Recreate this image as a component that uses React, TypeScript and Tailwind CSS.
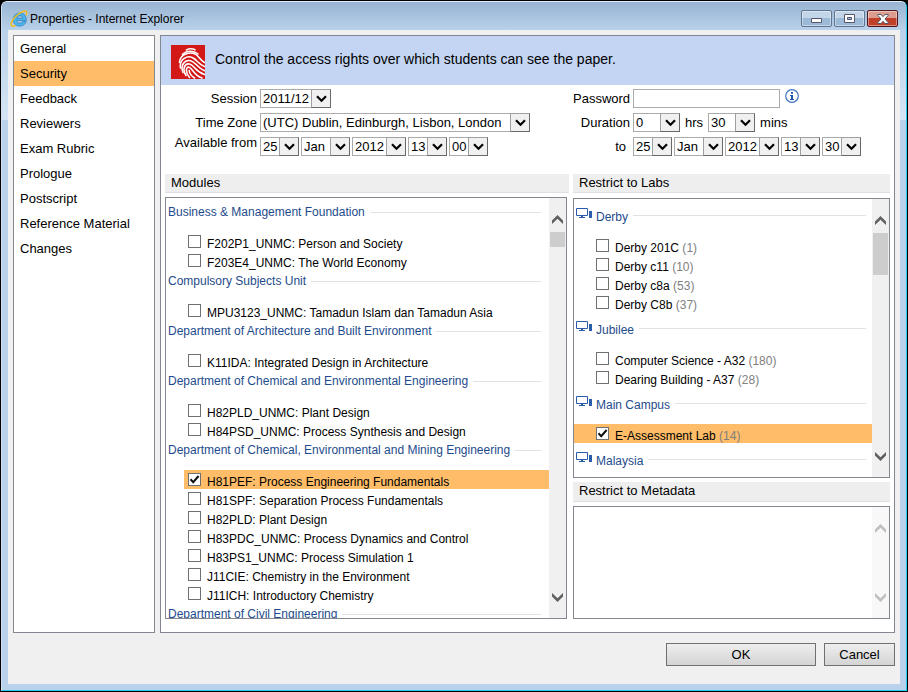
import React from "react";

type Item = { name: string; count?: number; checked?: boolean };
type Group = { title: string; items: Item[] };

const sections = [
  "General",
  "Security",
  "Feedback",
  "Reviewers",
  "Exam Rubric",
  "Prologue",
  "Postscript",
  "Reference Material",
  "Changes",
];

const modules: Group[] = [
  {
    title: "Business & Management Foundation",
    items: [{ name: "F202P1_UNMC: Person and Society" }, { name: "F203E4_UNMC: The World Economy" }],
  },
  { title: "Compulsory Subjects Unit", items: [{ name: "MPU3123_UNMC: Tamadun Islam dan Tamadun Asia" }] },
  {
    title: "Department of Architecture and Built Environment",
    items: [{ name: "K11IDA: Integrated Design in Architecture" }],
  },
  {
    title: "Department of Chemical and Environmental Engineering",
    items: [{ name: "H82PLD_UNMC: Plant Design" }, { name: "H84PSD_UNMC: Process Synthesis and Design" }],
  },
  {
    title: "Department of Chemical, Environmental and Mining Engineering",
    items: [
      { name: "H81PEF: Process Engineering Fundamentals", checked: true },
      { name: "H81SPF: Separation Process Fundamentals" },
      { name: "H82PLD: Plant Design" },
      { name: "H83PDC_UNMC: Process Dynamics and Control" },
      { name: "H83PS1_UNMC: Process Simulation 1" },
      { name: "J11CIE: Chemistry in the Environment" },
      { name: "J11ICH: Introductory Chemistry" },
    ],
  },
  { title: "Department of Civil Engineering", items: [] },
];

const labs: Group[] = [
  {
    title: "Derby",
    items: [
      { name: "Derby 201C", count: 1 },
      { name: "Derby c11", count: 10 },
      { name: "Derby c8a", count: 53 },
      { name: "Derby C8b", count: 37 },
    ],
  },
  {
    title: "Jubilee",
    items: [
      { name: "Computer Science - A32", count: 180 },
      { name: "Dearing Building - A37", count: 28 },
    ],
  },
  { title: "Main Campus", items: [{ name: "E-Assessment Lab", count: 14, checked: true }] },
  { title: "Malaysia", items: [] },
];

function Chevron({ up = false }: { up?: boolean }) {
  return (
    <svg width="11" height="9" viewBox="0 0 11 9" aria-hidden="true">
      <path
        d={up ? "M0 5.5 5.5 0 11 5.5V9L5.5 3.8 0 9Z" : "M0 0 5.5 5.2 11 0V3.5L5.5 9 0 3.5Z"}
        fill="currentColor"
      />
    </svg>
  );
}

function ScrollBar({ thumb, disabled = false }: { thumb?: string; disabled?: boolean }) {
  const tone = disabled ? "text-[#bfbfbf]" : "text-[#606060]";
  return (
    <div className={`flex w-[17px] shrink-0 flex-col ${disabled ? "bg-[#f8f8f8]" : "bg-[#f0f0f0]"}`}>
      <button type="button" aria-label="Scroll up" disabled={disabled} className={`flex h-[34px] items-center justify-center pt-2 ${tone}`}>
        <Chevron up />
      </button>
      <div className="flex-1 px-px">{thumb && <div className={`bg-[#cdcdcd] ${thumb}`} />}</div>
      <button type="button" aria-label="Scroll down" disabled={disabled} className={`flex h-[34px] items-center justify-center pb-2 ${tone}`}>
        <Chevron />
      </button>
    </div>
  );
}

function Select({ label, id, value, width }: { label: string; id?: string; value: string; width: string }) {
  return (
    <div className={`relative h-[19px] ${width}`}>
      <select
        id={id}
        aria-label={label}
        defaultValue={value}
        className="block h-full w-full appearance-none rounded-none border border-[#ababab] bg-white pl-[2px] text-[13px] leading-[17px] text-black outline-none"
      >
        <option>{value}</option>
      </select>
      <span className="pointer-events-none absolute inset-y-0 right-0 flex w-[20px] items-center justify-center border border-t-[#a0a0a0] border-r-[#696969] border-b-[#696969] border-l-[#a0a0a0] bg-[#f0f0f0]">
        <svg width="11" height="8" viewBox="0 0 11 8" aria-hidden="true">
          <path d="M1 1.3 5.5 5.8 10 1.3" fill="none" stroke="#000" strokeWidth="2.2" />
        </svg>
      </span>
    </div>
  );
}

function DateRow({ prefix, minute }: { prefix: string; minute: string }) {
  return (
    <div className="flex gap-[2px]">
      <Select label={`${prefix} day`} id={`${prefix}-day`} value="25" width="w-[39px]" />
      <Select label={`${prefix} month`} value="Jan" width="w-[49px]" />
      <Select label={`${prefix} year`} value="2012" width="w-[54px]" />
      <Select label={`${prefix} hour`} value="13" width="w-[39px]" />
      <Select label={`${prefix} minute`} value={minute} width="w-[39px]" />
    </div>
  );
}

function LabIcon() {
  return (
    <svg width="16" height="11" viewBox="0 0 16 11" className="mr-[4px] mb-1 shrink-0" aria-hidden="true">
      <path d="M.5.5h11v7H.5z" fill="#fff" stroke="#2a5caa" />
      <path d="M5 8h2v1h2v1H3V9h2z" fill="#2a5caa" />
      <path d="M13 3h3v7h-3z" fill="#2a5caa" />
    </svg>
  );
}

function CheckRow({ item, indent }: { item: Item; indent: string }) {
  return (
    <label className={`flex h-[19px] items-center whitespace-nowrap ${indent} ${item.checked ? "bg-[#ffbd69]" : ""}`}>
      <span className="relative h-[13px] w-[13px] shrink-0">
        <input
          type="checkbox"
          defaultChecked={item.checked}
          className="peer block h-[13px] w-[13px] appearance-none border border-[#707070] bg-white"
        />
        <svg
          width="13"
          height="13"
          viewBox="0 0 13 13"
          className="pointer-events-none absolute inset-0 hidden peer-checked:block"
          aria-hidden="true"
        >
          <path d="M2.5 6.3 5.2 9.2 10.6 3" fill="none" stroke="#111" strokeWidth="2" />
        </svg>
      </span>
      <span className="pt-[4px] pl-[6px] leading-4">
        {item.name}
        {item.count !== undefined && <span className="text-[#808080]"> ({item.count})</span>}
      </span>
    </label>
  );
}

function PanelTitle({ children, className }: { children: string; className: string }) {
  return (
    <h2 className={`shrink-0 border-b border-[#dfdfe3] bg-[#eee] text-[13px] leading-[17px] ${className}`}>{children}</h2>
  );
}

function EdgeLogo() {
  return (
    <svg width="18" height="18" viewBox="0 0 18 18" className="mt-[6px] shrink-0" aria-hidden="true">
      <path
        d="M16.2 11.6c-.9 2.700-3.300 4.600-6.400 4.600-3.800 0-6.700-2.900-6.700-6.600S6 3 9.800 3c4 0 6.800 3 6.600 7.500H6.900c.1 1.700 1.300 2.700 3 2.700 1.100 0 2-.6 2.500-1.600zM6.900 8.200h6c-.2-1.600-1.300-2.500-2.900-2.500S7.100 6.600 6.900 8.200z"
        fill="#4db4ea"
        stroke="#1a75bd"
        strokeWidth=".6"
      />
      <path
        d="M16 5.400C17.500 2.500 17 .9 15.200.9 11.500.9 3.200 7.200 1.500 12.500c-1 3.200.6 4.700 4 2.900"
        fill="none"
        stroke="#f0bd22"
        strokeWidth="1.500"
      />
    </svg>
  );
}

function Fingerprint() {
  return (
    <svg width="34" height="34" viewBox="0 0 34 34" className="mt-[2px] shrink-0" aria-hidden="true">
      <path d="M0 0h34v34H0z" fill="#d31818" />
      <g fill="none" stroke="#fff" strokeWidth="1.600" strokeLinecap="round">
        <path d="M15.500 5c2.500-1.400 6-1.400 8.500-.3" />
        <path d="M11.500 9.300c4.500-4 11-4 15.500-.3" />
        <path d="M8.500 17.500c.5-9.500 13.500-13 19.500-5 1.500 2 2.500 3.500 5.500 5" />
        <path d="M9.500 23c-1.500-8.500 7-14 13.500-9.500 4 3 4.500 5.500 10.500 8" />
        <path d="M12 27.500c-3-7 1.500-13 7.500-11.800 5.500 1.300 6 6.500 14 10" />
        <path d="M15 30.500c-4-6-1.500-12.500 3.500-11.500 5 1.200 5.500 7.500 15 10.500" />
        <path d="M18.500 32.500c-4.500-5.500-3.500-11-.5-10.300 3.800 1 4.500 8 13 10.800" />
        <path d="M23.500 33c-3.500-2.200-5-4.500-5.300-7.500" />
      </g>
    </svg>
  );
}

const captionButton =
  "flex h-[17px] w-[31px] items-center justify-center rounded-[2px] border shadow-[inset_0_0_0_1px_rgba(255,255,255,0.4)]";
const captionBlue = "border-[#60758f] bg-linear-to-b from-[#c3d5e9] from-50% to-[#9db9d8] to-50%";
const footerButton = "h-[23px] border border-[#707070] bg-linear-to-b from-[#eeeeee] to-[#d4d4d4]";

export default function App() {
  return (
    <div className="flex h-screen min-h-[480px] flex-col bg-black p-px font-['Liberation_Sans',Arial,sans-serif] text-[13px] text-black">
      <div className="flex min-h-0 flex-1 flex-col rounded-t-[6px] border border-t-[#e3edf7] border-r-[#27cdf0] border-b-[#27cdf0] border-l-[#cfe0f3] bg-[linear-gradient(#b9d1ea_28px,#d5e5f5_118px,#b9d1ea_118px)] px-[6px] pb-[6px]">
        <header className="-mx-[6px] flex h-[28px] shrink-0 items-center rounded-t-[5px] bg-linear-to-b from-[#98b4d2] to-[#b9d1ea] pr-[8px] pl-[8px]">
          <EdgeLogo />
          <h1 className="flex-1 pt-[6px] pl-[2px] text-xs leading-4">Properties - Internet Explorer</h1>
          <div className="flex gap-[2px] pt-[5px]">
            <button type="button" aria-label="Minimize" className={`${captionButton} ${captionBlue}`}>
              <svg width="11" height="5" viewBox="0 0 11 5" className="mt-1" aria-hidden="true">
                <path d="M.5.5h10v4H.5z" fill="#fff" stroke="#535666" />
              </svg>
            </button>
            <button type="button" aria-label="Maximize" className={`${captionButton} ${captionBlue}`}>
              <svg width="11" height="9" viewBox="0 0 11 9" aria-hidden="true">
                <path d="M.5.5h10v8H.5z" fill="#fff" stroke="#535666" />
                <path d="M3.5 3.5h4v2h-4z" fill="#9db9d8" stroke="#535666" />
              </svg>
            </button>
            <button
              type="button"
              aria-label="Close"
              className={`${captionButton} border-[#541720] bg-linear-to-b from-[#dc9c8f] from-45% to-[#c0402a] to-50%`}
            >
              <svg width="12" height="10" viewBox="0 0 12 10" aria-hidden="true">
                <path d="M.8.5H4l2 2.200L8 .5h3.200v.9L8 5l3.200 3.600v.9H8L6 7.300 4 9.500H.8v-.9L4 5 .8 1.400z" fill="#fff" stroke="#535666" />
              </svg>
            </button>
          </div>
        </header>

        <div className="flex min-h-0 flex-1 flex-col bg-[#f0f0f0] px-[5px] pt-[5px]">
          <div className="flex min-h-0 flex-1 gap-[5px]">
            <nav className="w-[142px] shrink-0 border border-[#828790] bg-white">
              {sections.map((name) => (
                <a
                  key={name}
                  href="#"
                  className={`block h-[25px] pl-[6px] leading-[25px] ${name === "Security" ? "bg-[#ffbd69]" : ""}`}
                >
                  {name}
                </a>
              ))}
            </nav>

            <main className="flex min-w-0 flex-1 flex-col border border-[#828790] bg-white">
              <div className="flex h-[49px] shrink-0 items-center bg-[#c3d5f2] pl-[10px] text-sm">
                <Fingerprint />
                <p className="pb-[3px] pl-[10px]">Control the access rights over which students can see the paper.</p>
              </div>

              <div className="grid shrink-0 grid-cols-[404fr_317fr] gap-x-1 px-1 pt-1">
                <div className="grid auto-rows-[24px] grid-cols-[92px_1fr] gap-x-[3px] leading-[19px]">
                  <label htmlFor="session" className="text-right">Session</label>
                  <Select label="Session" id="session" value="2011/12" width="w-[71px]" />
                  <label htmlFor="zone" className="text-right">Time Zone</label>
                  <Select label="Time Zone" id="zone" value="(UTC) Dublin, Edinburgh, Lisbon, London" width="w-[270px]" />
                  <label htmlFor="from-day" className="text-right leading-3">Available from</label>
                  <DateRow prefix="from" minute="00" />
                </div>
                <div className="grid auto-rows-[24px] grid-cols-[57px_1fr] gap-x-[3px] leading-[19px]">
                  <label htmlFor="password" className="text-right">Password</label>
                  <div className="flex gap-[5px]">
                    <input id="password" type="text" className="h-[19px] w-[147px] border border-[#ababab] bg-white px-1 outline-none" />
                    <svg width="14" height="14" viewBox="0 0 14 14" aria-hidden="true">
                      <circle cx="7" cy="7" r="6.300" fill="#fff" stroke="#3d74c4" strokeWidth="1.200" />
                      <path d="M6 3h2v1.700H6zM5 6h3v4h1v1H5v-1h1V7H5z" fill="#1f55a8" />
                    </svg>
                  </div>
                  <label htmlFor="hours" className="text-right">Duration</label>
                  <div className="flex gap-[5px]">
                    <Select label="Hours" id="hours" value="0" width="w-[47px]" />
                    <span>hrs</span>
                    <Select label="Minutes" value="30" width="w-[47px]" />
                    <span>mins</span>
                  </div>
                  <label htmlFor="to-day" className="pr-1 text-right">to</label>
                  <DateRow prefix="to" minute="30" />
                </div>
              </div>

              <div className="mt-[13px] grid min-h-0 flex-1 grid-cols-[404fr_317fr] grid-rows-[minmax(0,1fr)] gap-x-1 px-1 pb-[13px]">
                <section className="flex min-h-0 flex-col">
                  <PanelTitle className="h-[19px] pl-[6px]">Modules</PanelTitle>
                  <div className="mt-1 mr-[2px] flex min-h-0 flex-1 overflow-hidden border border-[#828790] text-xs">
                    <div className="min-w-0 flex-1 overflow-hidden pt-[5px]">
                      {modules.map((group) => (
                        <div key={group.title} className="pb-[2px]">
                          <h3 className="mb-[11px] flex h-[18px] items-center gap-[5px] pr-2 pl-[2px] whitespace-nowrap text-[#1e4b8c]">
                            {group.title}
                            <span className="h-px flex-1 bg-[#e2e2e6]" />
                          </h3>
                          <div className="pl-[18px]">
                            {group.items.map((item) => (
                              <CheckRow key={item.name} item={item} indent="pl-1" />
                            ))}
                          </div>
                        </div>
                      ))}
                    </div>
                    <ScrollBar thumb="h-[15px]" />
                  </div>
                </section>

                <section className="flex min-h-0 flex-col">
                  <PanelTitle className="h-[19px] pl-[6px]">Restrict to Labs</PanelTitle>
                  <div className="mt-[5px] flex min-h-0 flex-1 overflow-hidden border border-[#828790] text-xs">
                    <div className="min-w-0 flex-1 overflow-hidden pt-[7px]">
                      {labs.map((group) => (
                        <div key={group.title} className="pb-[7px]">
                          <h3 className="mb-3 flex h-[18px] items-center pr-[6px] pl-[2px] whitespace-nowrap text-[#1e4b8c]">
                            <LabIcon />
                            <span className="pt-1">{group.title}</span>
                            <span className="ml-[5px] h-px flex-1 bg-[#e2e2e6]" />
                          </h3>
                          {group.items.map((item) => (
                            <CheckRow key={item.name} item={item} indent="pl-[22px]" />
                          ))}
                        </div>
                      ))}
                    </div>
                    <ScrollBar thumb="h-[42px]" />
                  </div>
                  <PanelTitle className="mt-1 h-[20px] pl-[6px]">Restrict to Metadata</PanelTitle>
                  <div className="mt-1 flex h-[113px] shrink-0 justify-end border border-[#828790]">
                    <ScrollBar disabled />
                  </div>
                </section>
              </div>
            </main>
          </div>

          <footer className="flex shrink-0 justify-end gap-2 pt-[10px] pb-[18px]">
            <button type="button" className={`${footerButton} w-[150px]`}>
              OK
            </button>
            <button type="button" className={`${footerButton} w-[71px]`}>
              Cancel
            </button>
          </footer>
        </div>
      </div>
    </div>
  );
}
